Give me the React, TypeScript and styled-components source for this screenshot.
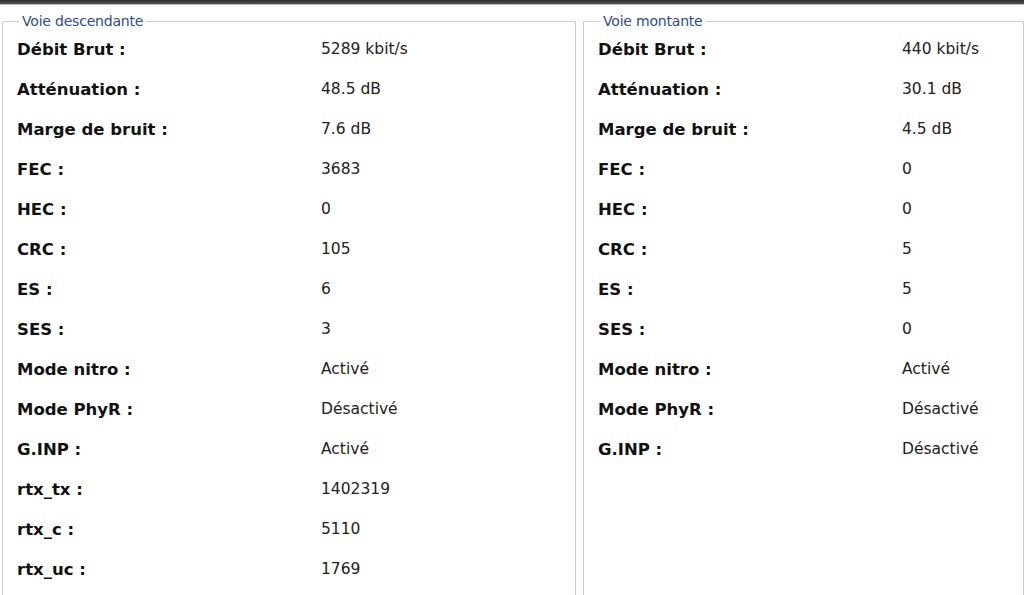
import * as React from 'react'
import styled, { createGlobalStyle } from 'styled-components'

const Global = createGlobalStyle`
  html, body {
    margin: 0;
    padding: 0;
    background: #fff;
    font-family: "DejaVu Sans", Tahoma, sans-serif;
    overflow: hidden;
  }
`

const TopBar = styled.div`
  height: 4px;
  background: linear-gradient(#2e2e2e, #555);
  border-bottom: 1px solid #bdbdbd;
`

const Panels = styled.div`
  display: flex;
  gap: 7px;
  padding: 0 2px 0 2px;
  height: 590px;
`

const Group = styled.fieldset<{ $width: number }>`
  flex: 0 0 ${p => p.$width}px;
  margin: 8px 0 0 0;
  padding: 0 0 0 14px;
  border: 1px solid #cfcfcf;
  border-bottom: none;
  min-width: 0;
  box-sizing: border-box;
`

const Legend = styled.legend`
  margin-left: 2px;
  padding: 0 3px;
  font-size: 14px;
  line-height: 16px;
  color: #2b4b9b;
  letter-spacing: -0.2px;
`

const Row = styled.div`
  display: grid;
  grid-template-columns: 304px 1fr;
  align-items: center;
  height: 40px;
`

const Label = styled.span`
  font-weight: bold;
  font-size: 16.5px;
  color: #111;
`

const Value = styled.span`
  font-size: 15.5px;
  color: #222;
`

type Item = [string, string]

const down: Item[] = [
  ['Débit Brut :', '5289 kbit/s'],
  ['Atténuation :', '48.5 dB'],
  ['Marge de bruit :', '7.6 dB'],
  ['FEC :', '3683'],
  ['HEC :', '0'],
  ['CRC :', '105'],
  ['ES :', '6'],
  ['SES :', '3'],
  ['Mode nitro :', 'Activé'],
  ['Mode PhyR :', 'Désactivé'],
  ['G.INP :', 'Activé'],
  ['rtx_tx :', '1402319'],
  ['rtx_c :', '5110'],
  ['rtx_uc :', '1769'],
]

const up: Item[] = [
  ['Débit Brut :', '440 kbit/s'],
  ['Atténuation :', '30.1 dB'],
  ['Marge de bruit :', '4.5 dB'],
  ['FEC :', '0'],
  ['HEC :', '0'],
  ['CRC :', '5'],
  ['ES :', '5'],
  ['SES :', '0'],
  ['Mode nitro :', 'Activé'],
  ['Mode PhyR :', 'Désactivé'],
  ['G.INP :', 'Désactivé'],
]

const Stats = ({ title, items, width }: { title: string, items: Item[], width: number }) => (
  <Group $width={width}>
    <Legend>{title}</Legend>
    {items.map(([label, value]) => (
      <Row key={label}>
        <Label>{label}</Label>
        <Value>{value}</Value>
      </Row>
    ))}
  </Group>
)

export default () => (
  <>
    <Global />
    <TopBar />
    <Panels>
      <Stats title="Voie descendante" items={down} width={574} />
      <Stats title="Voie montante" items={up} width={441} />
    </Panels>
  </>
)
